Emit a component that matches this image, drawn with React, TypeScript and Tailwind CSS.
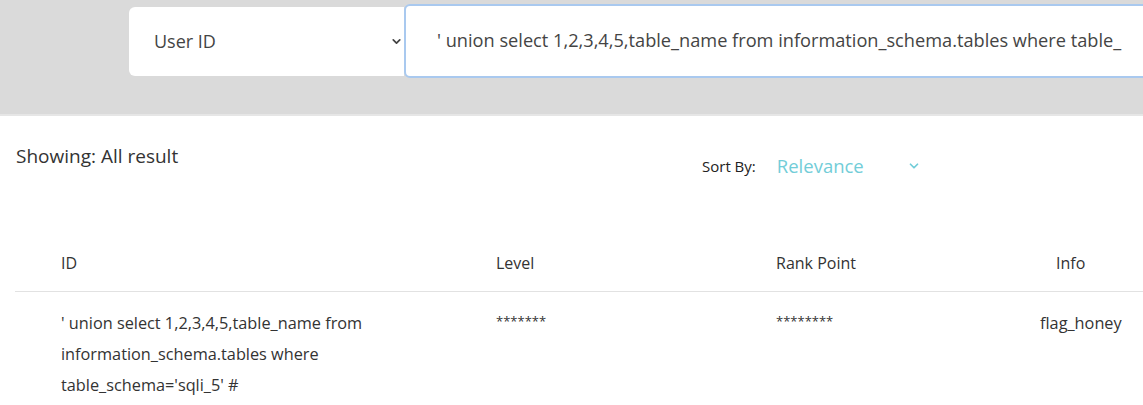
import { ChevronDown } from 'lucide-react';

const font = { fontFamily: '"Segoe UI", "Open Sans", "Noto Sans", sans-serif' };

export default function App() {
  return (
    <div className="w-[1143px] h-[405px] overflow-hidden bg-white text-[#333]" style={font}>
      {/* search band */}
      <div className="h-[116px] bg-[#dadada] border-b-2 border-[#e6e6e6] flex items-start pl-[129px] pt-[4px]">
        <div className="w-[275px] h-[69px] mt-[3px] bg-white rounded-l-md flex items-center justify-between pl-[25px] pr-[1px] shrink-0">
          <span className="text-[18px] text-[#444]">User ID</span>
          <ChevronDown className="w-[13px] h-[13px] text-[#444]" strokeWidth={3.2} />
        </div>
        <div className="w-[800px] h-[74px] shrink-0 bg-white border-2 border-[#a9c9ef] rounded-md flex items-center pl-[31px] overflow-hidden">
          <span className="text-[18.2px] text-[#444] whitespace-nowrap">
            ' union select 1,2,3,4,5,table_name from information_schema.tables where table_
          </span>
        </div>
      </div>

      {/* toolbar */}
      <div className="flex items-start pl-[16px] pt-[26px]">
        <div className="w-[686px] text-[19px] text-[#333]">Showing: All result</div>
        <div className="flex items-center mt-[10px]">
          <span className="text-[15px] text-[#222]">Sort By:</span>
          <span className="text-[18.5px] text-[#72cdd8] ml-[21px] w-[130px]">Relevance</span>
          <ChevronDown className="w-[14px] h-[14px] text-[#72cdd8]" strokeWidth={3} />
        </div>
      </div>

      {/* table */}
      <div className="mt-[55px] ml-[15px]">
        <div className="grid grid-cols-[481px_280px_280px_1fr] h-[57px] items-center border-b border-[#e2e2e2] text-[16px] text-[#333]">
          <div className="pl-[46px]">ID</div>
          <div>Level</div>
          <div>Rank Point</div>
          <div>Info</div>
        </div>
        <div className="grid grid-cols-[481px_280px_280px_1fr] pt-[16px] text-[16.3px] text-[#333] leading-[31px]">
          <div className="pl-[46px] pr-[100px]">
            ' union select 1,2,3,4,5,table_name from information_schema.tables where table_schema='sqli_5' #
          </div>
          <div className="text-[13px] leading-[26px]">*******</div>
          <div className="text-[13px] leading-[26px]">********</div>
          <div className="-ml-[16px] whitespace-nowrap">flag_honey</div>
        </div>
      </div>
    </div>
  );
}
